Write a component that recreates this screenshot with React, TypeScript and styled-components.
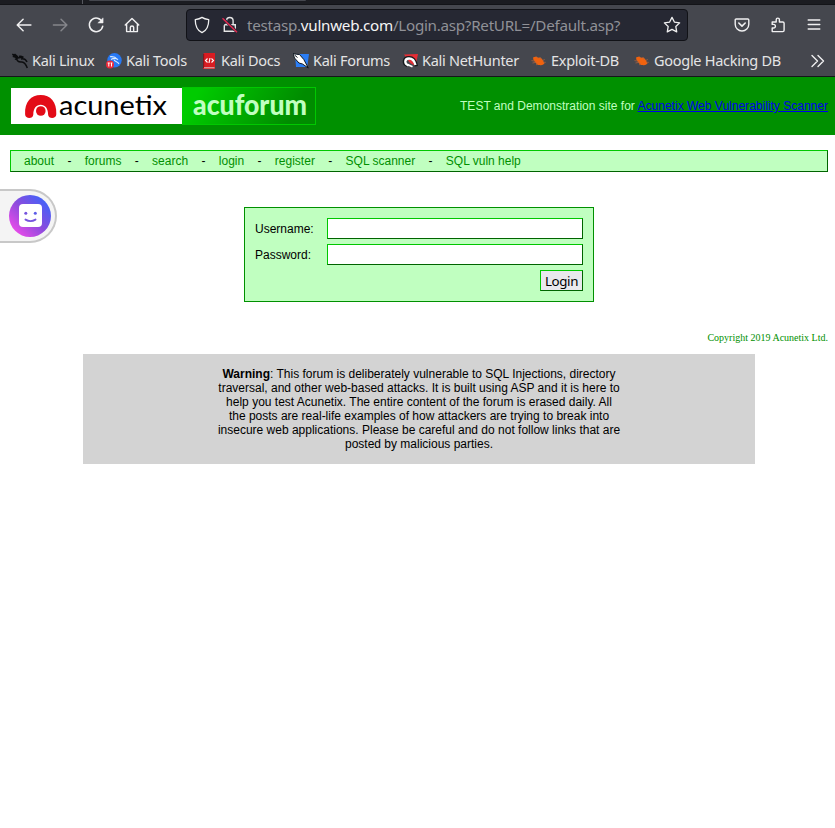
import React from "react";
import styled, { createGlobalStyle } from "styled-components";

const Global = createGlobalStyle`
  html, body { margin: 0; background: #fff; }
  * { box-sizing: border-box; }
  svg { display: block; flex: none; }
`;
const Page = styled.div`
  width: 835px;
  height: 828px;
  overflow: hidden;
  background: #fff;
  font: 12px/14px "Liberation Sans", Arial, sans-serif;
`;
const TabStrip = styled.div`
  height: 5px;
  background: #1b1c21;
  border-bottom: 1px solid #131418;
  display: flex;
  align-items: flex-start;
`;
const TabDivider = styled.div`
  width: 1px;
  height: 4px;
  margin: 0 6px 0 82px;
  background: #55575e;
`;
const TabEdge = styled.div`
  width: 217px;
  height: 1px;
  border-radius: 0 0 2px 2px;
  background: #45474e;
`;
const Chrome = styled.div`
  height: 72px;
  background: #45474e;
  border-bottom: 1px solid #15161a;
  font-family: "Noto Sans", sans-serif;
  color: #e4e4e5;
`;
const Toolbar = styled.div`
  height: 42px;
  padding: 4px 12px 0;
  display: flex;
`;
const ToolGroup = styled.div<{ $gap: number }>`
  display: flex;
  gap: ${(p) => p.$gap}px;
  height: 32px;
  align-items: center;
`;
const UrlBar = styled.div`
  flex: none;
  width: 502px;
  height: 32px;
  margin: 0 46px 0 42px;
  padding: 0 6px;
  border: 1px solid #111217;
  border-radius: 4px;
  background: #262833;
  display: flex;
  align-items: center;
`;
const Address = styled.div`
  flex: 1;
  margin-left: 6px;
  font-size: 15.2px;
  line-height: 30px;
  letter-spacing: -0.27px;
  color: #909197;
  white-space: nowrap;
`;
const Domain = styled.span`
  color: #f4f4f5;
`;
const LockSlot = styled.div`
  margin-left: 8px;
`;
const Bookmarks = styled.div`
  display: grid;
  grid-template-columns: 94px 95px 92px 109px 129px 103px 175px auto;
  padding-left: 12px;
  height: 28px;
  align-items: center;
  font-size: 14.5px;
  letter-spacing: -0.28px;
`;
const Bookmark = styled.div`
  display: flex;
  align-items: center;
  gap: 4px;
  line-height: 20px;
  white-space: nowrap;
`;
const BookmarkLabel = styled.span`
  padding-bottom: 2px;
  line-height: 18px;
`;
const Header = styled.header`
  height: 58px;
  background: #009000;
  display: flex;
  justify-content: space-between;
  align-items: center;
  padding: 0 7px 0 11px;
`;
const Logo = styled.div`
  width: 305px;
  height: 38px;
  display: flex;
  align-items: center;
`;
const Forum = styled.div`
  width: 134px;
  height: 38px;
  border: 1px solid #00c800;
  border-left: 0;
  background: linear-gradient(120deg, #00cb00 12%, #008c00 82%);
  & > svg { overflow: visible; }
`;
const Tagline = styled.div`
  color: #c0ffc0;
  letter-spacing: 0.01px;
`;
const Link = styled.a`
  color: #0000ee;
  text-decoration: underline;
`;
const Nav = styled.nav`
  height: 22px;
  margin: 15px 7px 0 10px;
  padding-left: 13px;
  display: flex;
  align-items: center;
  gap: 13.35px;
  background: #c0ffc0;
  border: 1px solid;
  border-color: #00c800 #006400 #006400 #00c800;
  color: #000;
`;
const NavLink = styled.a`
  color: #009000;
`;
const Assistant = styled.div`
  position: absolute;
  left: 0;
  top: 189px;
  width: 57px;
  height: 54px;
  padding: 4px 0 0 9px;
  border: 2px solid #c8c8c8;
  border-left: 0;
  border-radius: 0 27px 27px 0;
  background: #f4f4f4;
`;
const LoginForm = styled.form`
  width: 350px;
  height: 95px;
  margin: 35px 0 0 244px;
  padding: 10px;
  border: 1px solid #009000;
  background: #c0ffc0;
  display: grid;
  grid-template-columns: 72px 256px;
  grid-auto-rows: 21px;
  row-gap: 5px;
  align-items: center;
`;
const Field = styled.input`
  width: 256px;
  height: 21px;
  margin: 0;
  border: 1px solid;
  border-color: #00c800 #006400 #006400 #00c800;
  background: #fff;
`;
const LoginButton = styled.button`
  grid-column: 2;
  justify-self: end;
  width: 43px;
  height: 21px;
  margin: 0;
  padding: 1px 0 0;
  border: 1px solid;
  border-color: #00c800 #006400 #006400 #00c800;
  background: #e9e9ed;
  color: #000;
  letter-spacing: -0.35px;
  font: 13.333px/18px "Noto Sans", sans-serif;
`;
const Copyright = styled.div`
  margin: 30px 7px 0 0;
  text-align: right;
  color: #009000;
  font: 10px/12px "Liberation Serif", serif;
`;
const Warning = styled.div`
  width: 672px;
  height: 110px;
  margin: 10px 0 0 83px;
  padding: 13px 134px;
  background: #d3d3d3;
  text-align: center;
  white-space: nowrap;
`;

const Line = ({ children, size = 16, color = "#f0f0f1", width = 1.4 }: { children: React.ReactNode; size?: number; color?: string; width?: number }) => (
  <svg width={size} height={size} viewBox="0 0 16 16" fill="none" stroke={color} strokeWidth={width} strokeLinecap="round" strokeLinejoin="round">{children}</svg>
);

const Beetle = () => (
  <svg width="16" height="16" viewBox="0 0 16 16">
    <path d="M2 4.500q3-1.400 5 .2 3-.6 4.800 2.200l1.700 3.600q-2 2.400-4.800 1.600Q5.500 12 4.200 8.900 2 8 2 4.500z" fill="#f0620e" />
    <path d="M.5 7.600l4 .6M1.500 10l4-.8M5 3.300l2.200 2.200M9 4l.8 2.500M11.500 7.500l2.300-1M12 9.300h2.800M5 12l2-1.300" stroke="#b8653c" strokeWidth=".7" />
  </svg>
);

const icons = [
  <svg width="16" height="16" viewBox="0 0 16 16"><path d="M.3 1.200l4.500 2.300M.8 3.200l4.500 1.500M2.500 1l3.500 3M3 6.500c2-1.700 5-2.500 8-1.700M7 3.500c1.500-.5 2.800 0 4.500 1M4.800 5.500c0 4 3 3.300 5.200 3.500 2.800.2 4 2.500 5.300 6M9 6c2.500-.8 5 .5 6 3" stroke="#0c0d0f" strokeWidth="1.500" fill="none" strokeLinejoin="round" /></svg>,
  <svg width="16" height="16" viewBox="0 0 16 16"><circle cx="8.5" cy="7.3" r="7.2" fill="#2779f4" /><path d="M4 3.800c3.500-.5 5.500.2 7 2.200M5 6.500c2.500-1.500 5-1.500 7 .2M8 6.500c.3 2.500 3.500 1.500 5 4.500" stroke="#d8eaff" strokeWidth="1.100" fill="none" /><circle cx="4" cy="11.5" r="4" fill="#ed2939" /><path d="M1.700 10h2.100M2.800 10v3.500M4.600 10h1.800M5.500 10v3.500" stroke="#fff" /></svg>,
  <svg width="16" height="16" viewBox="0 0 16 16"><path d="M2 1.200L3.200 0H14v16H2z" fill="#d81c22" /><path d="M2.600 1v14" stroke="#84161b" strokeWidth="1.200" /><path d="M3 14.800h10.500" stroke="#d8d8d8" strokeWidth=".9" /><path d="M6.500 5.500l-2 2 2 2M10.500 5.500l2 2-2 2M9 5L8 10" fill="none" stroke="#fff" strokeWidth="1.100" /></svg>,
  <svg width="16" height="16" viewBox="0 0 16 16"><path d="M2 1h14l-1.800 13H3z" fill="#2b7df4" /><path d="M0 .5l3.500.8 3 .2 4.300 5 4.500 8.500-5.800-4-3.500-1L1.500 5z" fill="#fff" stroke="#101820" strokeWidth="1" /><path d="M1.500 2l3 2.500" stroke="#101820" /></svg>,
  <svg width="16" height="16" viewBox="0 0 16 16"><path d="M2 1.500l14-.5L13.500 13 8 10z" fill="#e52d35" /><path d="M5.500 12.500C1 11 1.300 4.800 7 4.800c4 0 6.500 3.500 7.300 8.500" fill="none" stroke="#15191c" strokeWidth="3.400" /><path d="M6.500 12.300C2 11 2.300 5.500 7 5.500c4 0 5.500 2.500 6.500 6.500" fill="none" stroke="#fff" strokeWidth="2.300" /><path d="M5.500 11.500l5 2.300" stroke="#fff" strokeWidth="1.800" /></svg>,
  <Beetle />, <Beetle />,
];
const bookmarks = ["Kali Linux", "Kali Tools", "Kali Docs", "Kali Forums", "Kali NetHunter", "Exploit-DB", "Google Hacking DB"];
const navItems = ["about", "forums", "search", "login", "register", "SQL scanner", "SQL vuln help"];

export default function App() {
  return (
    <Page>
      <Global />
      <TabStrip><TabDivider /><TabEdge /></TabStrip>
      <Chrome>
        <Toolbar>
          <ToolGroup $gap={12}>
            <Line size={24}><path d="M3.6 8h9M7.4 4.2L3.5 8l3.900 3.800" strokeWidth="1" /></Line>
            <Line size={24} color="#85868b"><path d="M3.6 8h9M8.7 4.2L12.6 8l-3.900 3.800" strokeWidth="1" /></Line>
            <Line size={24}><path d="M12.2 6.1a4.5 4.5 0 1 0 .3 2.700" strokeWidth="1" /><path d="M12.7 3.5v3.100H9.5z" fill="#f0f0f1" strokeWidth=".4" /></Line>
            <Line size={24}><path d="M3.5 8L8 3.6 12.5 8M4.4 7.5v4.900h7.200V7.5M6.900 12.300V9.5q0-.8 1.100-.8t1.100.8v2.800" strokeWidth=".95" /></Line>
          </ToolGroup>
          <UrlBar>
            <Line size={18} width={1.15}><path d="M8 1.200c1.700 1.200 3.600 1.700 6 2.100C14 9.300 12.400 12.800 8 14.800 3.600 12.800 2 9.300 2 3.300c2.400-.4 4.300-.9 6-2.100z" /></Line>
            <LockSlot>
              <svg width="22" height="18" viewBox="0 0 22 18" fill="none" stroke="#e5e5e6" strokeWidth="1.4"><path d="M5.3 9.300v6h11V8.800H5.300M7.500 8V4.800a3.300 3.300 0 0 1 6.600 0V8" /><path d="M4 2.500L18 16" stroke="#262833" strokeWidth="3" /><path d="M3.500 2.200L18 16.300" stroke="#e22850" strokeWidth="1.5" /></svg>
            </LockSlot>
            <Address>testasp.<Domain>vulnweb.com</Domain>/Login.asp?RetURL=/Default.asp?</Address>
            <Line size={18} width={1.15}><path d="M8 1.200l2.100 4.200 4.700.7-3.400 3.300.8 4.700L8 11.900l-4.200 2.200.8-4.700L1.200 6.100l4.700-.7z" /></Line>
          </UrlBar>
          <ToolGroup $gap={20}>
            <Line><path d="M2.200 2h11.600q1 0 1 1v4.200a6.800 6.800 0 0 1-13.600 0V3q0-1 1-1z" /><path d="M4.800 6l3.200 3.100L11.200 6" strokeWidth="1.6" /></Line>
            <Line><path d="M2.200 14.600V11h1.400a1.800 1.800 0 0 0 0-3.600H2.200V5h4V2.700a1.600 1.600 0 0 1 3.200 0V5h3.400q1.300 0 1.300 1.300v7q0 1.300-1.300 1.300z" /></Line>
            <Line><path d="M2.200 3h11.600M2.200 7.500h11.600M2.200 12h11.600" /></Line>
          </ToolGroup>
        </Toolbar>
        <Bookmarks>
          {bookmarks.map((b, i) => <Bookmark key={b}>{icons[i]}<BookmarkLabel>{b}</BookmarkLabel></Bookmark>)}
          <Line><path d="M3 2.500L8.500 8 3 13.500M9 2.500L14.500 8 9 13.500" /></Line>
        </Bookmarks>
      </Chrome>
      <Header>
        <Logo>
          <svg width="171" height="36" viewBox="0 0 171 36">
            <rect width="171" height="36" fill="#fff" />
            <path d="M14.100 26.200C13.500 14 20 7 29.700 7S45.900 14 45.300 26.200c0 5-8.200 5-8.200.2 0-6-3-9.700-7.400-9.700s-7.400 3.700-7.400 9.700c0 4.800-8.200 4.800-8.200-.2z" fill="#e30b17" />
            <circle cx="29.800" cy="23" r="4.800" fill="#e30b17" />
            <text x="48" y="27.300" textLength="108" lengthAdjust="spacingAndGlyphs" fontFamily="Lato, sans-serif" fontSize="27" fill="#000">acunetix</text>
          </svg>
          <Forum>
            <svg width="133" height="36" viewBox="0 0 133 36">
              <text x="11" y="27" textLength="114" lengthAdjust="spacingAndGlyphs" fontFamily="Lato, sans-serif" fontWeight="900" fontSize="29" fill="#c0ffc0">acuforum</text>
            </svg>
          </Forum>
        </Logo>
        <Tagline>TEST and Demonstration site for <Link>Acunetix Web Vulnerability Scanner</Link></Tagline>
      </Header>
      <Nav>
        {navItems.map((n, i) => <React.Fragment key={n}>{i > 0 && <span>-</span>}<NavLink>{n}</NavLink></React.Fragment>)}
      </Nav>
      <Assistant>
        <svg width="42" height="42" viewBox="0 0 42 42">
          <defs><linearGradient id="face" x1="0" y1="1" x2="1" y2="0"><stop offset=".1" stopColor="#f04bea" /><stop offset=".5" stopColor="#8b4bdd" /><stop offset=".9" stopColor="#3c64fb" /></linearGradient></defs>
          <circle cx="21" cy="21" r="21" fill="url(#face)" />
          <rect x="10" y="9" width="23" height="23" rx="4" fill="#fff" />
          <circle cx="16.800" cy="18.300" r="1.500" fill="#7654de" /><circle cx="26.300" cy="18.300" r="1.500" fill="#5c5ce8" />
          <path d="M16.500 24.600q5 3 10 0" fill="none" stroke="#7654de" strokeWidth="1.900" strokeLinecap="round" />
        </svg>
      </Assistant>
      <LoginForm>
        <label htmlFor="user">Username:</label><Field id="user" />
        <label htmlFor="pass">Password:</label><Field id="pass" type="password" />
        <LoginButton type="button">Login</LoginButton>
      </LoginForm>
      <Copyright>Copyright 2019 Acunetix Ltd.</Copyright>
      <Warning>
        <b>Warning</b>: This forum is deliberately vulnerable to SQL Injections, directory<br />
        traversal, and other web-based attacks. It is built using ASP and it is here to<br />
        help you test Acunetix. The entire content of the forum is erased daily. All<br />
        the posts are real-life examples of how attackers are trying to break into<br />
        insecure web applications. Please be careful and do not follow links that are<br />
        posted by malicious parties.
      </Warning>
    </Page>
  );
}
